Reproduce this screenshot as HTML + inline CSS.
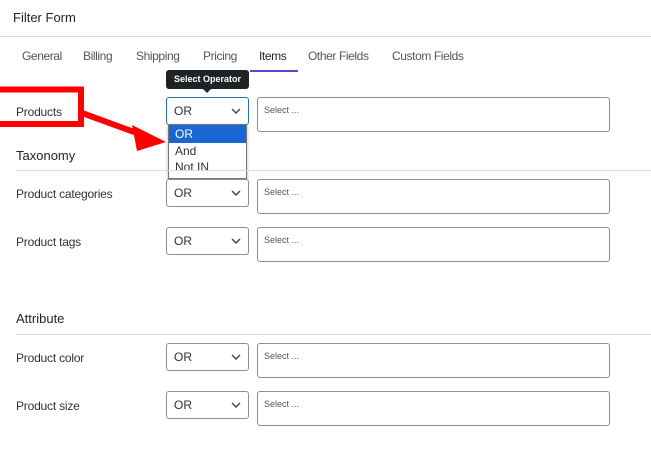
<!DOCTYPE html>
<html><head><style>
*{margin:0;padding:0;box-sizing:border-box}
body{width:651px;height:461px;background:#fff;font-family:"Liberation Sans",sans-serif;color:#3c434a;position:relative;overflow:hidden;font-size:12px}
.a{position:absolute;white-space:nowrap}
.sel{position:absolute;left:166px;width:83px;height:28px;border:1px solid #8c8f94;border-radius:3px;background:#fff}
.sel span{position:absolute;left:7px;top:6px;font-size:12px;color:#2c3338}
.sel svg{position:absolute;right:7px;top:10px}
.box{position:absolute;left:257px;width:353px;height:35px;border:1px solid #8c8f94;border-radius:3px;background:#fff}
.box span{position:absolute;left:6px;top:7px;font-size:9px;color:#50575e}
.lbl{position:absolute;left:16px;font-size:12px;color:#2c3338;letter-spacing:-0.2px}
.h{position:absolute;left:16px;font-size:13px;color:#1d2327}
.line{position:absolute;left:16px;right:0;height:1px;background:#dcdcde}
.tab{position:absolute;top:49px;font-size:12px;color:#50575e;letter-spacing:-0.4px;white-space:nowrap}
</style></head><body>
<div class="a" style="left:13px;top:10px;font-size:13px;color:#1d2327">Filter Form</div>
<div style="position:absolute;left:0;right:0;top:36px;height:1px;background:#dcdcde"></div>
<div class="tab" style="left:22px">General</div>
<div class="tab" style="left:83px">Billing</div>
<div class="tab" style="left:136px">Shipping</div>
<div class="tab" style="left:203px">Pricing</div>
<div class="tab" style="left:259px;color:#1d2327">Items</div>
<div style="position:absolute;left:250px;top:70px;width:48px;height:2px;background:#6a3fd0"></div>
<div class="tab" style="left:308px">Other Fields</div>
<div class="tab" style="left:392px">Custom Fields</div>

<div class="a" style="left:166px;top:70px;width:83px;height:19px;background:#1d2327;border-radius:3px;color:#fff;font-size:9px;text-align:center;line-height:19px;font-weight:bold">Select Operator</div>
<div style="position:absolute;left:203px;top:89px;width:0;height:0;border-left:4px solid transparent;border-right:4px solid transparent;border-top:4px solid #1d2327"></div>

<div class="lbl" style="top:105px">Products</div>
<div class="sel" style="top:97px;border-color:#2271b1"><span>OR</span><svg width="10" height="7"><path d="M1 1l4 4 4-4" stroke="#3c434a" stroke-width="1.4" fill="none"/></svg></div>
<div class="box" style="top:97px"><span>Select ...</span></div>

<div style="position:absolute;left:168px;top:124px;width:79px;height:55px;border:1px solid #767676;background:#fff;box-shadow:0 1px 3px rgba(0,0,0,.3);overflow:hidden">
<div style="height:18px;background:#1a66d2;color:#fff;font-size:12px;padding-left:6px;line-height:18px">OR</div>
<div style="height:17px;color:#2c3338;font-size:12px;padding-left:6px;line-height:17px">And</div>
<div style="height:17px;color:#2c3338;font-size:12px;padding-left:6px;line-height:15px">Not IN</div>
</div>

<svg style="position:absolute;left:0;top:0" width="651" height="200">
<path d="M-5 89.5H81V124H-5" stroke="#f00" stroke-width="6" fill="none"/>
<path d="M82 113L145 136" stroke="#f00" stroke-width="6"/>
<path d="M132 125L166 142L137 151Z" fill="#f00"/>
</svg>

<div class="h" style="top:148px">Taxonomy</div>
<div class="line" style="top:170px"></div>
<div class="lbl" style="top:187px">Product categories</div>
<div class="sel" style="top:179px"><span>OR</span><svg width="10" height="7"><path d="M1 1l4 4 4-4" stroke="#3c434a" stroke-width="1.4" fill="none"/></svg></div>
<div class="box" style="top:179px"><span>Select ...</span></div>
<div class="lbl" style="top:235px">Product tags</div>
<div class="sel" style="top:227px"><span>OR</span><svg width="10" height="7"><path d="M1 1l4 4 4-4" stroke="#3c434a" stroke-width="1.4" fill="none"/></svg></div>
<div class="box" style="top:227px"><span>Select ...</span></div>

<div class="h" style="top:311px">Attribute</div>
<div class="line" style="top:334px"></div>
<div class="lbl" style="top:351px">Product color</div>
<div class="sel" style="top:343px"><span>OR</span><svg width="10" height="7"><path d="M1 1l4 4 4-4" stroke="#3c434a" stroke-width="1.4" fill="none"/></svg></div>
<div class="box" style="top:343px"><span>Select ...</span></div>
<div class="lbl" style="top:399px">Product size</div>
<div class="sel" style="top:391px"><span>OR</span><svg width="10" height="7"><path d="M1 1l4 4 4-4" stroke="#3c434a" stroke-width="1.4" fill="none"/></svg></div>
<div class="box" style="top:391px"><span>Select ...</span></div>
</body></html>
